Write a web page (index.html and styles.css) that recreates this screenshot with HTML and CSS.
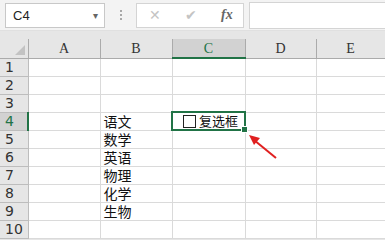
FILE: index.html
```html
<!DOCTYPE html>
<html lang="zh-CN">
<head>
    <meta charset="UTF-8">
    <title>复选框</title>
    <link rel="stylesheet" href="styles.css">
</head>
<body>
    <!-- 编辑栏 -->
    <div class="toolbar">
        <div class="name-box">
            <span>C4</span>
            <span class="drop">&#9662;</span>
        </div>
        <div class="dots"><i></i><i></i><i></i></div>
        <div class="fx-box">
            <span class="btn">&#x2715;</span>
            <span class="btn">&#x2714;</span>
            <span class="fx">fx</span>
        </div>
        <div class="formula"></div>
    </div>

    <!-- 表格 -->
    <div class="sheet">
        <table class="grid">
            <colgroup>
                <col class="c-hd"><col class="c-a"><col class="c-b"><col class="c-c"><col class="c-d"><col class="c-e">
            </colgroup>
            <tr class="col-heads">
                <th class="corner"><span class="tri"></span></th>
                <th>A</th><th>B</th><th class="active-col">C</th><th>D</th><th>E</th>
            </tr>
            <tr><th>1</th><td></td><td></td><td></td><td></td><td></td></tr>
            <tr><th>2</th><td></td><td></td><td></td><td></td><td></td></tr>
            <tr><th>3</th><td></td><td></td><td></td><td></td><td></td></tr>
            <tr><th class="active-row">4</th><td></td><td>语文</td>
                <td class="selected">
                    <label class="check"><span class="box"></span>复选框</label>
                    <span class="handle"></span>
                </td><td></td><td></td></tr>
            <tr><th>5</th><td></td><td>数学</td><td></td><td></td><td></td></tr>
            <tr><th>6</th><td></td><td>英语</td><td></td><td></td><td></td></tr>
            <tr><th>7</th><td></td><td>物理</td><td></td><td></td><td></td></tr>
            <tr><th>8</th><td></td><td>化学</td><td></td><td></td><td></td></tr>
            <tr><th>9</th><td></td><td>生物</td><td></td><td></td><td></td></tr>
            <tr><th>10</th><td></td><td></td><td></td><td></td><td></td></tr>
        </table>

        <!-- 红色箭头 -->
        <svg class="arrow" width="40" height="34" viewBox="0 0 40 34">
            <line x1="30" y1="27" x2="8" y2="9" stroke="#e02020" stroke-width="2"/>
            <polygon points="3,4 14,7 8,14" fill="#e02020"/>
        </svg>
    </div>
</body>
</html>
```

FILE: styles.css
```css
body {
    margin: 0;
    background-color: #e6e6e6;
    font-family: "Liberation Sans", "Noto Sans CJK SC", sans-serif;
    width: 385px;
    height: 240px;
    overflow: hidden;
}

.toolbar {
    display: flex;
    align-items: center;
    height: 31px;
    background-color: #f3f3f3;
    padding: 0 0 0 5px;
    box-sizing: border-box;
    border-bottom: 1px solid #e0e0e0;
}

.name-box {
    width: 100px;
    height: 25px;
    box-sizing: border-box;
    border: 1px solid #c8c8c8;
    background-color: #fff;
    display: flex;
    align-items: center;
    justify-content: space-between;
    padding: 0 6px 0 7px;
    font-size: 13px;
    color: #222;
}

.drop {
    font-size: 10px;
    color: #666;
}

.dots {
    width: 31px;
    display: flex;
    flex-direction: column;
    align-items: center;
    gap: 2px;
}

.dots i {
    width: 2px;
    height: 2px;
    background-color: #a8a8a8;
}

.fx-box {
    width: 108px;
    height: 25px;
    box-sizing: border-box;
    border: 1px solid #d4d4d4;
    background-color: #fff;
    display: flex;
    align-items: center;
    padding: 0 0 0 12px;
    gap: 22px;
}

.btn {
    font-size: 14px;
    color: #c4c4c4;
    width: 14px;
}

.fx {
    font-family: "Liberation Serif", serif;
    font-style: italic;
    font-weight: bold;
    font-size: 14px;
    color: #666;
}

.formula {
    margin-left: 5px;
    flex: 1;
    height: 25px;
    border: 1px solid #d4d4d4;
    border-right: none;
    background-color: #fff;
}

.sheet {
    position: relative;
    margin-top: 8px;
}

.grid {
    border-collapse: collapse;
    table-layout: fixed;
    width: 385px;
    background-color: #fff;
}

.c-hd { width: 28px; }
.c-a { width: 72px; }
.c-b { width: 72px; }
.c-c { width: 73px; }
.c-d { width: 71px; }
.c-e { width: 69px; }

.grid tr {
    height: 18px;
}

.grid td {
    border: 1px solid #dadada;
    padding: 0 0 0 3px;
    font-size: 14px;
    line-height: 16px;
    color: #111;
    white-space: nowrap;
    font-family: "Noto Sans CJK SC", sans-serif;
}

.grid th {
    background-color: #e6e6e6;
    font-weight: normal;
    color: #333;
    border: 1px solid #bdbdbd;
    border-top-color: #dadada;
    padding: 0;
    font-size: 14px;
    line-height: 16px;
    font-family: "DejaVu Sans", sans-serif;
}

.grid tr th:first-child {
    text-align: left;
    padding-left: 5px;
    border-left: none;
}

.col-heads th {
    font-family: "Liberation Serif", serif;
    font-size: 14px;
    border-top: none;
    border-bottom: 1px solid #ababab;
    border-color: #ababab;
    text-align: center;
    padding-top: 2px;
    height: 15px;
}

.col-heads th.corner {
    padding: 0;
    position: relative;
}

.tri {
    position: absolute;
    right: 3px;
    bottom: 3px;
    width: 0;
    height: 0;
    border-left: 10px solid transparent;
    border-bottom: 10px solid #c3c3c3;
}

.grid th.active-col {
    background-color: #d2d2d2;
    color: #217346;
    border-bottom: 2px solid #217346;
}

.grid th.active-row {
    background-color: #d2d2d2;
    color: #217346;
    border-right: 2px solid #217346;
}

.grid td.selected {
    border: 2px solid #217346;
    position: relative;
    padding-left: 0;
}

.check {
    display: flex;
    align-items: center;
    gap: 3px;
    padding-left: 10px;
    font-size: 13px;
}

.box {
    width: 11px;
    height: 11px;
    border: 1px solid #222;
    background-color: #fff;
}

.handle {
    position: absolute;
    right: -4px;
    bottom: -4px;
    width: 5px;
    height: 5px;
    background-color: #217346;
    border: 1px solid #fff;
}

.arrow {
    position: absolute;
    left: 246px;
    top: 92px;
}
```
